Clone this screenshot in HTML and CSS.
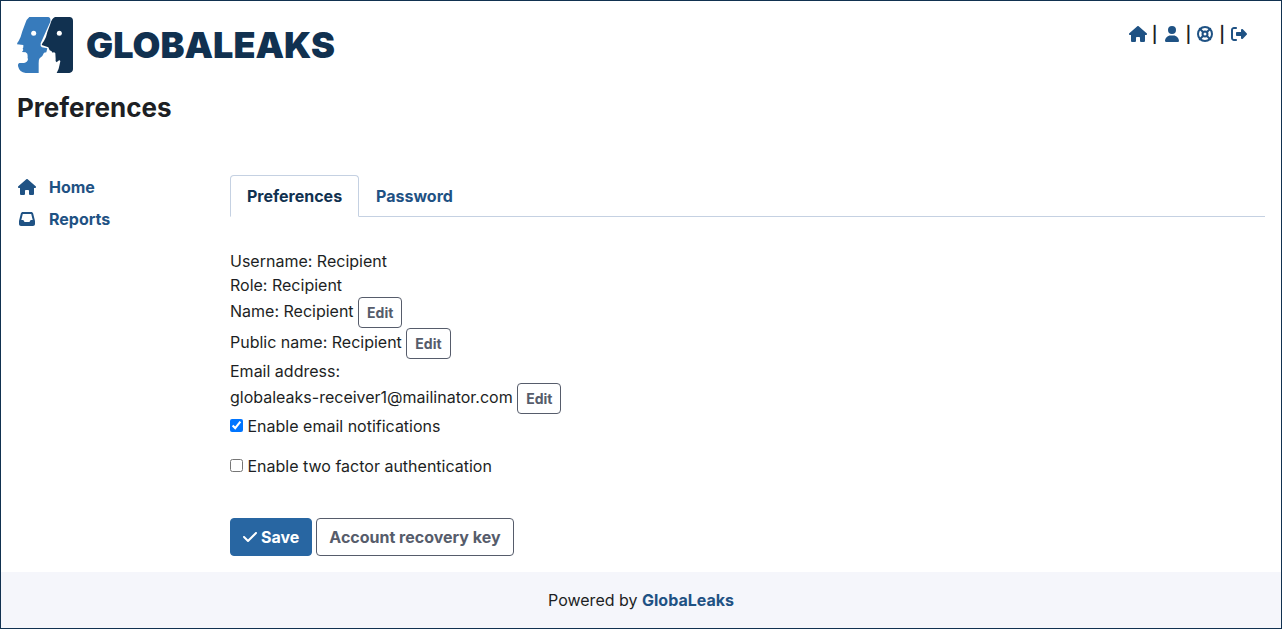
FILE: index.html
```html
<!DOCTYPE html>
<html lang="en">
<head>
<meta charset="utf-8">
<meta name="viewport" content="width=device-width, initial-scale=1">
<title>Preferences - GlobaLeaks</title>
<link rel="stylesheet" href="styles.css">
</head>
<body>
<svg class="sprite" aria-hidden="true">
  <symbol id="house" viewBox="0 0 576 512"><path d="M575.8 255.5c0 18-15 32.1-32 32.1h-32l.7 160.2c0 2.7-.2 5.4-.5 8.1V472c0 22.1-17.9 40-40 40H456c-1.1 0-2.2 0-3.3-.1c-1.4 .1-2.8 .1-4.2 .1H416 392c-22.1 0-40-17.9-40-40V448 384c0-17.700-14.300-32-32-32H256c-17.700 0-32 14.300-32 32v64 24c0 22.100-17.900 40-40 40H160 128.100c-1.500 0-3-.1-4.500-.2c-1.200 .1-2.400 .2-3.600 .2H104c-22.100 0-40-17.900-40-40V360c0-.9 0-1.900 .1-2.800V287.600H32c-18 0-32-14-32-32.100c0-9 3-17 10-24L266.400 8c7-7 15-8 22-8s15 2 21 7L564.800 231.500c8 7 12 15 11 24z"/></symbol>
  <symbol id="user" viewBox="0 0 448 512"><path d="M224 256A128 128 0 1 0 224 0a128 128 0 1 0 0 256zm-45.7 48C79.8 304 0 383.8 0 482.3C0 498.7 13.3 512 29.7 512H418.3c16.4 0 29.7-13.3 29.7-29.7C448 383.8 368.2 304 269.7 304H178.3z"/></symbol>
  <symbol id="ring" viewBox="0 0 512 512"><g fill="none" stroke="currentColor"><circle cx="256" cy="256" r="224" stroke-width="64"/><circle cx="256" cy="256" r="80" stroke-width="64"/><path stroke-width="64" stroke-linecap="round" d="M90 90l110 110M422 90L312 200M90 422l110-110M422 422L312 312"/></g></symbol>
  <symbol id="sign-out" viewBox="0 0 512 512"><path d="M377.9 105.9L500.7 228.7c7.2 7.2 11.3 17.1 11.3 27.3s-4.1 20.1-11.3 27.3L377.9 406.1c-6.4 6.4-15 9.9-24 9.9c-18.7 0-33.9-15.2-33.9-33.9l0-62.1-128 0c-17.7 0-32-14.3-32-32l0-64c0-17.7 14.3-32 32-32l128 0 0-62.1c0-18.7 15.2-33.9 33.9-33.9c9 0 17.6 3.6 24 9.9zM160 96L96 96c-17.7 0-32 14.3-32 32l0 256c0 17.7 14.3 32 32 32l64 0c17.7 0 32 14.3 32 32s-14.3 32-32 32l-64 0c-53 0-96-43-96-96L0 128C0 75 43 32 96 32l64 0c17.7 0 32 14.3 32 32s-14.3 32-32 32z"/></symbol>
  <symbol id="inbox" viewBox="0 0 512 512"><path d="M121 32C91.6 32 66 52 58.9 80.5L1.9 308.4C.6 313.5 0 318.7 0 323.9V416c0 35.3 28.7 64 64 64H448c35.3 0 64-28.7 64-64V323.9c0-5.2-.6-10.4-1.9-15.5l-57-227.9C446 52 420.4 32 391 32H121zm0 64H391l48 192H387.8c-12.1 0-23.2 6.8-28.6 17.7l-14.3 28.6c-5.4 10.8-16.5 17.7-28.6 17.7H195.8c-12.1 0-23.2-6.8-28.6-17.7l-14.3-28.6c-5.4-10.8-16.5-17.7-28.6-17.7H73L121 96z"/></symbol>
  <symbol id="check" viewBox="0 0 448 512"><path d="M438.6 105.4c12.5 12.5 12.5 32.8 0 45.3l-256 256c-12.5 12.5-32.8 12.5-45.3 0l-128-128c-12.5-12.5-12.5-32.8 0-45.3s32.8-12.5 45.3 0L160 338.7 393.4 105.4c12.5-12.5 32.8-12.5 45.3 0z"/></symbol>
</svg>
<div class="page">
  <header class="header">
    <a class="brand" href="#">
      <svg class="brand-mark" viewBox="51 51 168 168" aria-hidden="true">
        <path fill="#377bbc" d="M88 51H145Q153 53 151 65L122 130Q120 139 126 142L142 145L139 157L132 158Q129 168 119 175Q115 180 116 190V219H77Q58 217 54 198Q53 191 58 189H72Q82 188 84 178Q82 174 83 168Q84 160 77 157L66 156L70 150Q66 147 70 142V135L51 133Q51 129 56 123Q63 111 67 94L76 70Q80 57 88 51Z"/>
        <path fill="#113150" d="M165 51H208Q219 52 219 62V208Q218 218 208 219H170Q177 207 178 197L181 184Q180 179 175 182L170 187Q165 185 167 177L166 160Q163 155 158 158L154 153L149 151L145 142L125 135Q126 130 132 123Q139 112 142 96L151 72Q155 56 165 51Z"/>
        <circle cx="101" cy="100" r="7.500" fill="#fff"/>
        <circle cx="178" cy="100" r="7.500" fill="#fff"/>
      </svg>
      <span class="brand-name">GLOBALEAKS</span>
    </a>
    <nav class="tools" aria-label="Account">
      <a href="#" aria-label="Home"><svg class="icon"><use href="#house"/></svg></a>
      <span>|</span>
      <a href="#" aria-label="Preferences"><svg class="icon"><use href="#user"/></svg></a>
      <span>|</span>
      <a href="#" aria-label="Support"><svg class="icon"><use href="#ring"/></svg></a>
      <span>|</span>
      <a href="#" aria-label="Log out"><svg class="icon"><use href="#sign-out"/></svg></a>
    </nav>
  </header>
  <h1 class="title">Preferences</h1>
  <div class="layout">
    <nav class="sidebar" aria-label="Main">
      <a href="#"><svg class="icon"><use href="#house"/></svg>Home</a>
      <a href="#"><svg class="icon"><use href="#inbox"/></svg>Reports</a>
    </nav>
    <main>
      <nav class="tabs" aria-label="Sections">
        <a class="tab tab-active" href="#" aria-current="page">Preferences</a>
        <a class="tab" href="#">Password</a>
      </nav>
      <form class="form">
        <div>Username: Recipient</div>
        <div>Role: Recipient</div>
        <div class="field">Name: Recipient <button class="btn btn-small" type="button">Edit</button></div>
        <div class="field">Public name: Recipient <button class="btn btn-small" type="button">Edit</button></div>
        <div>Email address:</div>
        <div class="field">globaleaks-receiver1@mailinator.com <button class="btn btn-small" type="button">Edit</button></div>
        <div class="option"><input type="checkbox" id="notify" checked> <label for="notify">Enable email notifications</label></div>
        <div class="option"><input type="checkbox" id="twofa"> <label for="twofa">Enable two factor authentication</label></div>
        <div class="actions">
          <button class="btn btn-primary" type="submit"><svg class="icon-check" aria-hidden="true"><use href="#check"/></svg>Save</button>
          <button class="btn" type="button">Account recovery key</button>
        </div>
      </form>
    </main>
  </div>
  <footer class="footer">Powered by <a href="#">GlobaLeaks</a></footer>
</div>
</body>
</html>
```
FILE: styles.css
```css
* {
  box-sizing: border-box;
}

body {
  margin: 0;
  background: #fff;
  color: #1d1f24;
  font: 16px/24px Inter, sans-serif;
}

a {
  color: #1f5284;
  font-weight: 700;
  text-decoration: none;
}

.sprite {
  position: absolute;
  width: 0;
  height: 0;
}

.page {
  display: flex;
  flex-direction: column;
  min-height: 100vh;
  border: 1px solid #113150;
}

.header {
  display: flex;
  justify-content: space-between;
  align-items: flex-start;
  padding: 16px 32px 16px 16px;
}

.brand {
  display: flex;
  align-items: center;
  gap: 13px;
  color: #113150;
}

.brand-mark {
  width: 56px;
  height: 56px;
}

.brand-name {
  font-size: 36px;
  font-weight: 900;
  line-height: 56px;
}

.icon {
  display: block;
  width: 20px;
  height: 16px;
  color: #1f5284;
  fill: currentColor;
}

.tools {
  display: flex;
  align-items: center;
  gap: 4px;
  padding-top: 4px;
  font-size: 16px;
  line-height: 26px;
  font-weight: 600;
}

.title {
  margin: 0;
  padding: 0 16px;
  font-size: 26px;
  line-height: 38px;
  font-weight: 700;
}

.layout {
  display: grid;
  grid-template-columns: 197px 1fr;
  gap: 16px;
  flex: 1;
  padding: 48px 16px 16px;
}

.sidebar {
  margin-top: -4px;
}

.sidebar a {
  display: flex;
  align-items: center;
  gap: 12px;
  height: 32px;
}

.tabs {
  display: flex;
  border-bottom: 1px solid #c5d1e2;
}

.tab {
  margin-bottom: -1px;
  padding: 8px 16px;
  border: 1px solid transparent;
  border-radius: 4px 4px 0 0;
}

.tab-active {
  border-color: #c5d1e2 #c5d1e2 #fff;
  background: #fff;
  color: #113150;
}

.form {
  padding-top: 32px;
}

.btn {
  padding: 6px 12px;
  border: 1px solid #565c6b;
  border-radius: 4px;
  background: #fff;
  color: #565c6b;
  font: 700 16px/24px Inter, sans-serif;
  vertical-align: middle;
}

.btn-small {
  padding: 4px 8px;
  font-size: 14px;
  line-height: 21px;
}

.btn-primary {
  display: flex;
  align-items: center;
  gap: 4px;
  border-color: #2866a2;
  background: #2866a2;
  color: #fff;
}

.icon-check {
  width: 14px;
  height: 16px;
  fill: currentColor;
}

.option {
  margin-bottom: 16px;
}

.option input {
  width: 13px;
  height: 13px;
  margin: 0;
}

.actions {
  display: flex;
  gap: 4px;
  padding-top: 24px;
}

.footer {
  padding: 16px;
  background: #f5f6fb;
  text-align: center;
}
```
